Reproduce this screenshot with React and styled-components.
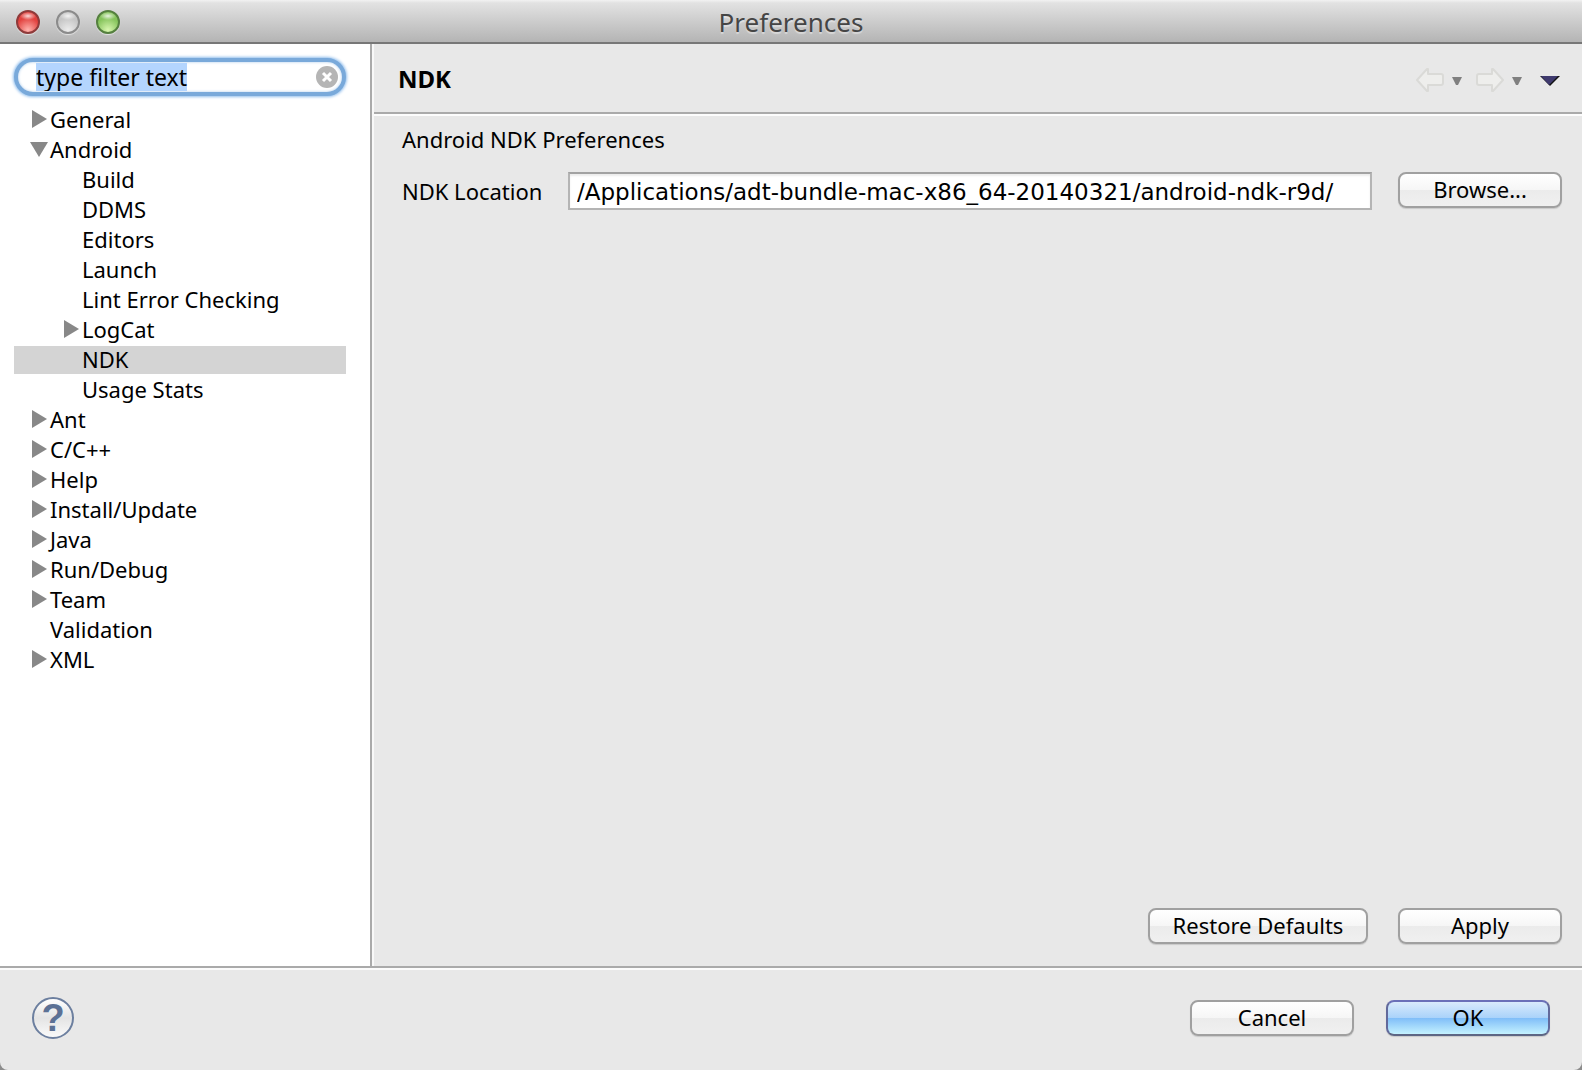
import { useEffect, useRef, useState } from "react";
import styled, { createGlobalStyle, css } from "styled-components";

const GlobalStyle = createGlobalStyle`
  * {
    box-sizing: border-box;
  }
  body {
    margin: 0;
    background-color: #8c8c8c;
  }
  body,
  button,
  input {
    font-family: "Noto Sans", "Open Sans", sans-serif;
    font-size: 22px;
    line-height: 28px;
    color: #000;
  }
`;

const Window = styled.div`
  display: flex;
  flex-direction: column;
  min-height: 100vh;
  background-color: #e8e8e8;
  border-radius: 0 0 8px 8px;
  overflow: hidden;
`;

const TitleBar = styled.header`
  display: grid;
  grid-template-columns: 1fr auto 1fr;
  align-items: center;
  height: 44px;
  padding: 2px 16px 0;
  background: linear-gradient(#f2f2f2, #e2e2e2 3px, #b4b4b4);
  border-bottom: 2px solid #777;
`;

const Lights = styled.div`
  display: flex;
  gap: 16px;
`;

const lightColors = {
  close: ["#8f3a3a", "#e2423f", "#ffb3ae"],
  minimize: ["#8b8b8b", "#c6c6c6", "#ececec"],
  zoom: ["#55803f", "#86c45c", "#d9f7b0"],
};

const Light = styled.button`
  width: 24px;
  height: 24px;
  padding: 0;
  border: 2px solid ${(props) => lightColors[props.$kind][0]};
  border-radius: 50%;
  background:
    radial-gradient(ellipse 8px 4px at 50% 4px, #fffc, #fff0),
    radial-gradient(
      circle at 50% 90%,
      ${(props) => lightColors[props.$kind][2]},
      ${(props) => lightColors[props.$kind][1]} 60%
    );
  box-shadow: 0 1px 1px #fff9;
`;

const Title = styled.h1`
  margin: 0;
  font-size: 26px;
  font-weight: 400;
  line-height: 36px;
  color: #454545;
  text-shadow: 0 2px 1px #fff6;
`;

const Main = styled.div`
  display: flex;
  flex: 1;
`;

const Sidebar = styled.aside`
  width: 374px;
  padding: 14px 26px 14px 14px;
  background-color: #fff;
  border-right: 2px solid #f8f8f8;
  box-shadow: inset -2px 0 #aaa;
`;

const Search = styled.div`
  display: flex;
  align-items: center;
  height: 38px;
  padding: 0 4px 0 18px;
  background-color: #fff;
  border: 4px solid #79a9da;
  border-radius: 19px;
  box-shadow: 0 0 3px 1px #8fbdec, inset 0 0 3px #a9c9ea;
`;

const SearchInput = styled.input`
  flex: 1;
  min-width: 0;
  height: 28px;
  padding: 0;
  border: none;
  outline: none;
  background: none;
  font-size: 23px;
  &::selection {
    color: #000;
    background-color: #b4d5fe;
  }
`;

const ClearButton = styled.button`
  display: flex;
  padding: 0;
  border: none;
  background: none;
`;

const Tree = styled.ul`
  margin: 10px 0 0;
  padding: 0;
  list-style: none;
`;

const TreeRow = styled.button`
  display: flex;
  align-items: center;
  gap: 2px;
  width: 100%;
  height: 28px;
  margin-bottom: 2px;
  padding: 0 0 2px ${(props) => (props.$level ? 48 : 16)}px;
  border: none;
  background-color: ${(props) => (props.$selected ? "#d4d4d4" : "transparent")};
  text-align: left;
  white-space: nowrap;
`;

const ArrowSlot = styled.svg`
  width: 18px;
  height: 18px;
  flex: none;
  fill: #888;
`;

const Page = styled.main`
  display: flex;
  flex: 1;
  flex-direction: column;
  min-width: 0;
`;

const PageHeader = styled.div`
  display: flex;
  align-items: center;
  justify-content: space-between;
  height: 72px;
  padding: 0 22px 0 24px;
  border-bottom: 2px solid #fcfcfc;
  box-shadow: inset 0 -2px #aaa;
`;

const PageTitle = styled.h2`
  margin: 0;
  font-size: 24px;
  line-height: 32px;
`;

const Nav = styled.div`
  display: flex;
  align-items: center;
  padding-top: 2px;
`;

const NavButton = styled.button`
  display: flex;
  padding: ${(props) => (props.$small ? "2px 0 0" : "0")};
  margin-left: ${(props) => props.$gap}px;
  border: none;
  background: none;
`;

const PageBody = styled.div`
  display: flex;
  flex: 1;
  flex-direction: column;
  padding: 9px 20px 22px 28px;
`;

const Description = styled.p`
  margin: 0 0 19px;
`;

const Field = styled.div`
  display: flex;
  align-items: flex-start;
`;

const FieldLabel = styled.label`
  width: 166px;
  line-height: 38px;
`;

const PathInput = styled.input`
  flex: 1;
  min-width: 0;
  height: 38px;
  margin-right: 26px;
  padding: 2px 7px 0;
  border: 2px solid #b4b4b4;
  border-top-color: #a2a2a2;
  background-color: #fff;
  box-shadow: inset 0 2px 2px #ececec;
  outline: none;
  font-family: "DejaVu Sans", sans-serif;
  font-size: 23px;
`;

const Actions = styled.div`
  display: flex;
  gap: ${(props) => props.$gap}px;
`;

const PageActions = styled(Actions)`
  justify-content: flex-end;
  margin-top: auto;
`;

const Button = styled.button`
  width: ${(props) => (props.$wide ? 220 : 164)}px;
  height: 36px;
  padding: 0 0 2px;
  border: 2px solid #a0a0a0;
  border-radius: 8px;
  background: linear-gradient(#fff, #f6f6f6 50%, #ebebeb 50%, #f0f0f0);
  box-shadow: 0 1px 1px #0002;
  line-height: 30px;
  white-space: nowrap;
  ${(props) =>
    props.$primary &&
    css`
      border-color: #6b70b8 #62699b #5d6684;
      background: linear-gradient(#d9eafc, #a9d2fa 50%, #7fbdf8 50%, #c4f2ff);
    `}
`;

const Footer = styled.footer`
  display: flex;
  align-items: center;
  justify-content: space-between;
  height: 104px;
  padding: 2px 32px 4px;
  border-top: 2px solid #aaa;
  box-shadow: inset 0 2px #fcfcfc;
`;

const HelpButton = styled.button`
  width: 42px;
  height: 42px;
  padding: 0;
  border: 2px solid #6c7f9f;
  border-radius: 50%;
  background: linear-gradient(#fff, #e4e4e4 50%, #fafafa);
  font-family: "Liberation Sans", sans-serif;
  font-size: 38px;
  font-weight: 700;
  line-height: 38px;
  color: #5c7195;
`;

const items = [
  { name: "General", arrow: "right" },
  { name: "Android", arrow: "down" },
  { name: "Build", level: 1 },
  { name: "DDMS", level: 1 },
  { name: "Editors", level: 1 },
  { name: "Launch", level: 1 },
  { name: "Lint Error Checking", level: 1 },
  { name: "LogCat", level: 1, arrow: "right" },
  { name: "NDK", level: 1 },
  { name: "Usage Stats", level: 1 },
  { name: "Ant", arrow: "right" },
  { name: "C/C++", arrow: "right" },
  { name: "Help", arrow: "right" },
  { name: "Install/Update", arrow: "right" },
  { name: "Java", arrow: "right" },
  { name: "Run/Debug", arrow: "right" },
  { name: "Team", arrow: "right" },
  { name: "Validation" },
  { name: "XML", arrow: "right" },
];

const Arrow = ({ direction }) => (
  <ArrowSlot viewBox="0 0 18 18" aria-hidden="true">
    {direction === "right" && <path d="M2 0L17 9L2 18Z" />}
    {direction === "down" && <path d="M0 2H18L9 17Z" />}
  </ArrowSlot>
);

const HistoryArrow = ({ forward }) => (
  <svg width="28" height="24" viewBox="0 0 28 24" aria-hidden="true">
    <path
      d={
        forward
          ? "M27 12L17 1H16V6H3Q1 6 1 8V15Q1 17 3 17H16V23H17Z"
          : "M1 12L11 1H12V6H25Q27 6 27 8V15Q27 17 25 17H12V23H11Z"
      }
      fill="#eeeeec"
      stroke="#dadad7"
      strokeWidth="2"
      strokeLinejoin="round"
    />
  </svg>
);

const SmallArrow = () => (
  <svg width="10" height="8" viewBox="0 0 10 8" aria-hidden="true">
    <path d="M0 0H10L6 8H4Z" fill="#808080" />
  </svg>
);

const App = () => {
  const [selected, setSelected] = useState("NDK");
  const filter = useRef(null);

  useEffect(() => {
    filter.current.focus();
    filter.current.select();
  }, []);

  return (
    <Window>
      <GlobalStyle />
      <TitleBar>
        <Lights>
          <Light $kind="close" aria-label="Close" />
          <Light $kind="minimize" aria-label="Minimize" />
          <Light $kind="zoom" aria-label="Zoom" />
        </Lights>
        <Title>Preferences</Title>
      </TitleBar>
      <Main>
        <Sidebar>
          <Search>
            <SearchInput
              ref={filter}
              aria-label="Filter"
              defaultValue="type filter text"
            />
            <ClearButton aria-label="Clear">
              <svg width="22" height="22" viewBox="0 0 22 22">
                <circle cx="11" cy="11" r="11" fill="#b5b5b5" />
                <path
                  d="M7 7L15 15M15 7L7 15"
                  stroke="#fff"
                  strokeWidth="3"
                />
              </svg>
            </ClearButton>
          </Search>
          <Tree>
            {items.map((item) => (
              <li key={item.name}>
                <TreeRow
                  $level={item.level}
                  $selected={item.name === selected}
                  onClick={() => setSelected(item.name)}
                >
                  <Arrow direction={item.arrow} />
                  {item.name}
                </TreeRow>
              </li>
            ))}
          </Tree>
        </Sidebar>
        <Page>
          <PageHeader>
            <PageTitle>NDK</PageTitle>
            <Nav>
              <NavButton aria-label="Back">
                <HistoryArrow />
              </NavButton>
              <NavButton $gap={8} $small aria-label="Back history">
                <SmallArrow />
              </NavButton>
              <NavButton $gap={14} aria-label="Forward">
                <HistoryArrow forward />
              </NavButton>
              <NavButton $gap={8} $small aria-label="Forward history">
                <SmallArrow />
              </NavButton>
              <NavButton $gap={18} $small aria-label="Menu">
                <svg width="20" height="10" viewBox="0 0 20 10">
                  <path d="M0 0H20L10 10Z" fill="#111" />
                  <path d="M1 0H18L9 9Z" fill="#3f3a6e" />
                </svg>
              </NavButton>
            </Nav>
          </PageHeader>
          <PageBody>
            <Description>Android NDK Preferences</Description>
            <Field>
              <FieldLabel htmlFor="ndk-location">NDK Location</FieldLabel>
              <PathInput
                id="ndk-location"
                defaultValue="/Applications/adt-bundle-mac-x86_64-20140321/android-ndk-r9d/"
              />
              <Button>Browse...</Button>
            </Field>
            <PageActions $gap={30}>
              <Button $wide>Restore Defaults</Button>
              <Button>Apply</Button>
            </PageActions>
          </PageBody>
        </Page>
      </Main>
      <Footer>
        <HelpButton aria-label="Help">?</HelpButton>
        <Actions $gap={32}>
          <Button>Cancel</Button>
          <Button $primary>OK</Button>
        </Actions>
      </Footer>
    </Window>
  );
};

export default App;
